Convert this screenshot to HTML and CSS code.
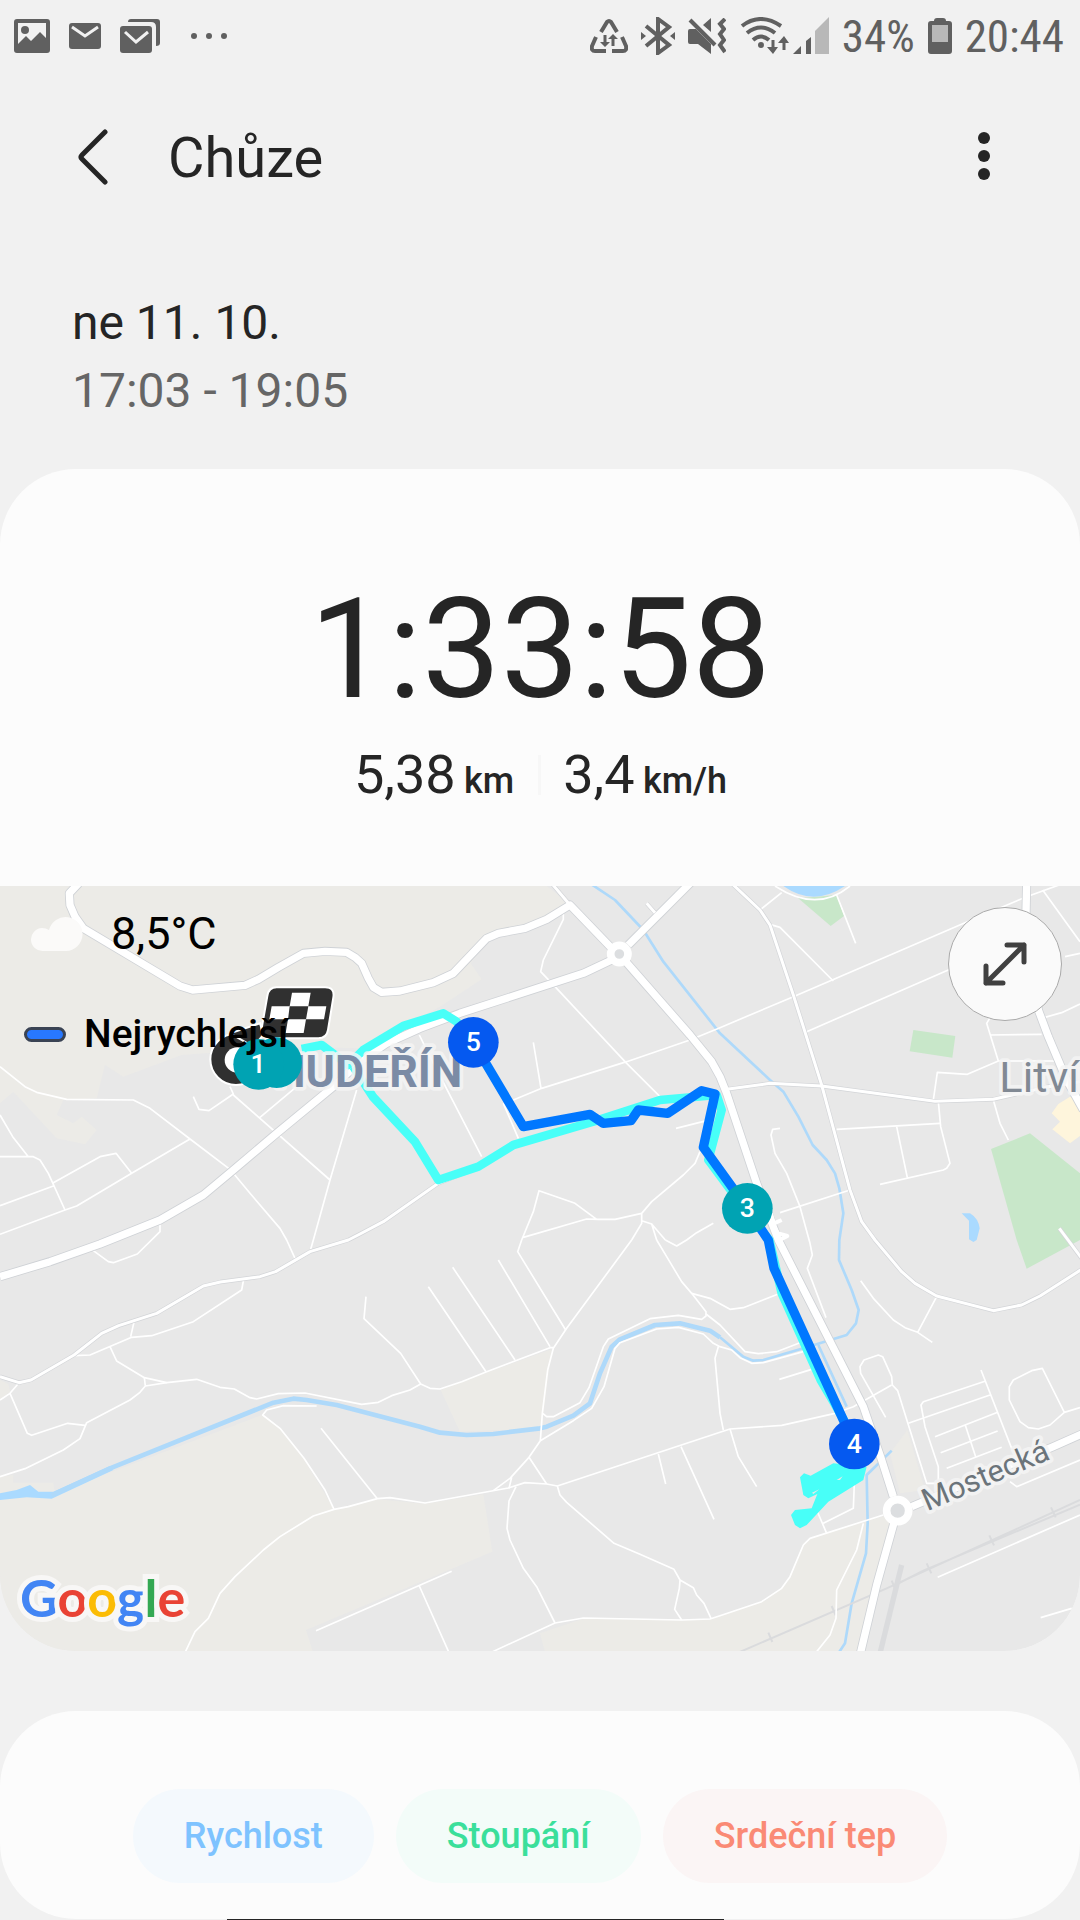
FILE: index.html
```html
<!DOCTYPE html>
<html lang="cs">
<head>
    <meta charset="UTF-8">
    <meta name="viewport" content="width=device-width, initial-scale=1.0">
    <title>Chůze</title>
    <link rel="stylesheet" href="styles.css">
</head>
<body>
    <div class="statusbar">
        <div class="notifications">
            <svg width="36" height="36" viewBox="0 0 36 36">
                <path fill-rule="evenodd" d="M3 1h30a3 3 0 0 1 3 3v28a3 3 0 0 1-3 3H3a3 3 0 0 1-3-3V4a3 3 0 0 1 3-3zM4 5v21l8-8 5 5 9-9 6 6V5z"/>
                <circle cx="11" cy="12" r="4"/>
            </svg>
            <svg width="32" height="36" viewBox="0 0 32 36">
                <rect y="5" width="32" height="26" rx="3"/>
                <path class="cut" d="M3 9l13 9 13-9" stroke-width="3"/>
            </svg>
            <svg width="40" height="36" viewBox="0 0 40 36">
                <rect y="8" width="32" height="27" rx="3"/>
                <path class="cut" d="M5 14l11 10 12-10" stroke-width="3"/>
                <path d="M8 4q0-3 3-3h26q3 0 3 3v21q0 3-4 3V9q0-5-5-5z"/>
            </svg>
            <svg class="more-dots" width="36" height="36" viewBox="0 0 36 36">
                <circle cx="3" cy="18" r="3"/><circle cx="18" cy="18" r="3"/><circle cx="33" cy="18" r="3"/>
            </svg>
        </div>
        <div class="system">
            <svg width="38" height="36" viewBox="0 0 38 36">
                <path class="line" d="M11 14l6-10q2-2 4 0l6 10M6 19l-4 9q-1 5 3 5h11M32 19l4 9q1 5-3 5H22" stroke-width="4"/>
                <path class="line" d="M15 17v9M23 28v-9" stroke-width="3"/>
                <path d="M10 24h10l-5 5zM18 21h10l-5-5z"/>
            </svg>
            <svg width="34" height="38" viewBox="0 0 34 38">
                <path class="line" d="M5 9l23 19-11 8V2l11 8L5 29" stroke-width="4"/>
                <path d="M0 15l5 4-5 4zM34 15l-5 4 5 4z"/>
            </svg>
            <svg width="38" height="36" viewBox="0 0 38 36">
                <path d="M2 11h6l15 15v10L10 26H2q-2 0-2-2V13q0-2 2-2zM23 0v14l-8-7z"/>
                <path class="line" d="M2 2l25 25" stroke-width="4"/>
                <path class="line" d="M37 1l-5 5 4 5-4 5 4 6-4 5 5 7" stroke-width="4"/>
            </svg>
            <div class="network">
                <svg width="50" height="38" viewBox="0 0 50 38">
                    <path class="line" d="M3 9q18-14 39 0M8 16q14-11 28 0M14 23q8-7 16 0" stroke-width="4"/>
                    <circle cx="22" cy="28" r="3"/>
                    <path class="line" d="M34 23v10M45 33V23" stroke-width="3"/>
                    <path d="M28 30h11l-5 7zM39 26h11l-5-7z"/>
                </svg>
                <svg width="36" height="38" viewBox="0 0 36 38">
                    <path d="M0 37l8-8v8zM13 24l5-4v17h-5z"/>
                    <path class="weak" d="M22 14L36 0v37H22z"/>
                </svg>
            </div>
            <span>34%</span>
            <svg width="24" height="36" viewBox="0 0 24 36">
                <path d="M6 3q0-3 3-3h6q3 0 3 3h3q3 0 3 3v27q0 3-3 3H3q-3 0-3-3V6q0-3 3-3z"/>
                <path class="weak" d="M4 7h16v17H4z"/>
            </svg>
            <span>20:44</span>
        </div>
    </div>

    <header class="appbar">
        <button class="iconbtn back" aria-label="Zpět">
            <svg width="32" height="56" viewBox="0 0 32 56"><path d="M29 3L6 26q-2 2 0 4l23 23"/></svg>
        </button>
        <h1 class="title">Chůze</h1>
        <button class="iconbtn more" aria-label="Další možnosti">
            <svg width="12" height="56" viewBox="0 0 12 56"><circle cx="6" cy="9" r="6"/><circle cx="6" cy="27" r="6"/><circle cx="6" cy="45" r="6"/></svg>
        </button>
    </header>

    <div class="when">
        <p class="date">ne 11. 10.</p>
        <p class="time">17:03 - 19:05</p>
    </div>

    <section class="card">
        <div class="summary">
            <p class="duration">1:33:58</p>
            <div class="metrics">
                <p>5,38 <small>km</small></p>
                <p>3,4 <small>km/h</small></p>
            </div>
        </div>

        <div class="map">
            <svg class="mapcanvas" viewBox="0 18 3240 2295">
                <defs>
                    <g id="main">
                        <path d="M236 10L208 40 210 75 225 110 250 145 540 318 578 330 735 316 775 298 835 262 910 220 975 214 1040 217 1065 232 1085 250 1105 295 1120 322 1145 337 1200 333 1300 308 1360 280 1460 175 1495 160 1575 145 1640 118 1710 75 1840 210"/>
                        <path d="M2075 5L1885 195"/>
                        <path d="M1835 240L1750 280 1380 400 1260 445 1160 490 1080 545 1000 620 830 760 700 870 610 945 480 1020 300 1092 150 1145 0 1190"/>
                        <path d="M1880 248L2070 465 2135 545 2160 590 2180 640 2270 910 2335 1080 2590 1580 2645 1740 2680 1850"/>
                        <path d="M2683 1925L2630 2115 2580 2325M2735 1880L3160 1700 3250 1660"/>
                        <path d="M3080 5L3078 100 3115 390 3145 470 3200 600 3250 690"/>
                    </g>
                    <g id="side">
                        <path d="M1655 10L1710 75M1940 70L1965 98"/>
                        <path d="M2195 10L2280 90 2310 135 2380 345 2465 615 2550 930 2585 1025 2625 1080 2705 1175 2745 1210 2810 1248 2980 1292 3065 1275 3120 1248 3245 1168"/>
                        <path d="M2180 628L2310 610 2465 618 2805 664 2980 658 3145 620 3240 605"/>
                        <path d="M0 1490L57 1508 93 1500 222 1425 305 1360 356 1337 470 1300 610 1218 661 1206 780 1190 827 1175 930 1115 1045 1080 1080 1062 1150 1025 1315 910 1440 860 1540 800"/>
                        <path d="M3178 1045L3245 1135"/>
                    </g>
                </defs>

                <g class="land">
                    <path d="M0 18H1640L1705 70 1570 145 1470 175 1412 250 1445 298 1320 380 1080 505 880 500 545 525 370 590 315 555 290 655 190 660 170 705 220 730 245 710 290 750 255 793 170 775 40 635 0 670z"/>
                    <path d="M0 1790L40 1785V1808H160L165 1840 785 1605 840 1645 910 1735 1002 1888 1132 1858 1275 1871 1450 1843 1477 2015 918 2250 940 2320H0z"/>
                    <path d="M0 1500L25 1512 30 1535 0 1560z"/>
                    <path d="M1322 1530L1385 1505 1655 1408 1625 1645 1380 1655z"/>
                    <path d="M1620 2260L1750 2216 2130 2219 2300 2160 2360 2110 2410 1990 2430 1975 2660 1905 2675 1940 2583 2320H1636z"/>
                    <path d="M2722 1650L2670 1720 2700 1840 2775 1830z"/>
                </g>
                <g class="park">
                    <path d="M2395 55L2510 45 2532 108 2492 138z"/>
                    <path d="M2740 450L2866 468 2857 533 2729 514z"/>
                    <path d="M2973 807L3090 760 3240 880V1080L3080 1166 3050 1080z"/>
                </g>
                <path class="shop" d="M3210 650L3175 672 3155 700 3180 725 3157 748 3210 790 3240 768V665z"/>
                <path class="lake" d="M2350 18Q2440 82 2535 18zM2885 1000H2910Q2935 1015 2939 1045L2930 1080 2920 1086 2907 1078V1022z"/>
                <path class="lake" d="M0 1840L50 1830 90 1815 115 1835 160 1835 330 1758 340 1770 155 1856 80 1852 0 1860z"/>
                <g class="water">
                    <path class="river" d="M155 1846L330 1765 820 1568 880 1556 920 1560 1010 1575 1260 1640 1320 1658 1400 1665 1480 1662 1620 1645 1640 1640 1720 1607 1770 1570 1800 1480 1835 1400 1860 1378 1965 1335 2040 1330 2130 1352 2160 1372"/>
                    <path d="M2160 1372L2230 1430 2260 1442 2290 1440 2410 1405 2540 1365 2568 1330 2576 1290 2555 1230 2517 1140 2518 1080 2530 1000 2518 925 2505 880 2480 840 2438 795 2395 710 2350 635 2310 600 2160 460 1990 245 1930 150 1845 60 1770 10"/>
                    <path d="M2455 1395L2540 1580M2675 1712L2600 1785 2603 1930 2598 2020 2555 2170 2535 2290 2515 2320"/>
                </g>
                <g class="rail">
                    <path d="M2210 2320L2660 2125 3240 1860M2680 2118L2770 2072 3240 1874"/>
                    <path class="sleepers" d="M2305 2258l12 28M2495 2178l12 28M2675 2102l12 28M2780 2050l14 30M2968 1966l14 30M3153 1882l14 30"/>
                    <path class="yard" d="M2705 2055L2640 2320"/>
                </g>

                <g class="minor">
                    <path d="M0 560L75 620 110 637 200 658 400 660 450 685 570 777 690 868 750 940 840 1045 860 1080 885 1135M0 705L38 770 85 830M0 830H100L120 840 145 880 195 990M0 977L160 918M160 908L300 830 348 820 395 880M0 1063L195 990 230 978 395 880 570 777"/>
                    <path d="M580 650L597 688 627 692 700 642 690 620M700 645L990 900M780 712L890 620M1070 630L990 900 940 1080 930 1115M480 1030V1055L412 1122 340 1148 325 1145 280 1112"/>
                    <path d="M730 1203L725 1230 580 1325 455 1367 395 1372 270 1425 222 1427M403 1322L392 1370M330 1400L350 1443 433 1493 500 1508 590 1498 660 1522 703 1527 750 1553 770 1557 835 1541 915 1539 1085 1573 1135 1567 1175 1547 1230 1530 1262 1512 1290 1525 1320 1527 1385 1505 1460 1475 1650 1403H1660"/>
                    <path d="M433 1493L436 1518 500 1508M436 1518L420 1537 390 1560 260 1628 240 1676 190 1710 75 1766 0 1790M255 1636L203 1630 95 1666 82 1660 30 1540 57 1508M30 1540L0 1560"/>
                    <path d="M1098 1250L1092 1316 1202 1420 1262 1512M1285 1220L1458 1475M1358 1162L1545 1440M1495 1140L1650 1400M1565 1080L1553 1115 1697 1350"/>
                    <path d="M950 1578L850 1577 800 1590 788 1605 840 1645 912 1735 975 1830 1002 1888M963 1645L1132 1856M554 2320L585 2255 625 2215 660 2140 705 2090 790 2010 840 1970 940 1908 1002 1888 1045 1880 1132 1856 1170 1853 1275 1869 1525 1824 1575 1808 1640 1812 1672 1818 2160 1657 2190 1647 2345 1636 2505 1600 2560 1580 2675 1515"/>
                    <path d="M948 2252L1355 2074M1258 2118L1348 2320M1478 2315L1665 2229 1750 2214 2045 2220 2130 2217 2160 2207 2285 2165 2345 2125 2370 2090 2410 1995 2430 1975 2650 1905"/>
                    <path d="M1895 1080L1700 1345 1660 1405 1643 1470 1627 1600 1621 1682 1587 1732 1530 1795 1480 1832M1535 1792L1527 1825M1587 1732L1640 1812M1628 1600L1640 1610H1660L1740 1568 1767 1523 1810 1400 1825 1377 1950 1316 2035 1306 2105 1318 2118 1308V1295L2075 1240 2045 1205 2000 1130 1970 1080"/>
                    <path d="M1621 1682L1720 1622 1775 1585 1812 1520 1845 1405 1860 1388 1970 1347 2035 1342 2110 1362 2140 1390 2160 1400 2195 1410 2220 1433 2255 1450 2290 1448 2410 1415M2118 1302L2160 1335 2235 1415 2275 1421 2330 1415 2400 1388M2155 1400L2145 1435 2160 1600 2170 1650"/>
                    <path d="M1548 1820L1527 1863 1521 1945 1530 1980 1570 2065 1610 2120 1665 2229M1672 1818L1680 1845 1700 1867 1842 1990 1920 2023 2022 2068 2040 2100 2038 2125 2024 2188 2045 2220M2040 2100L2080 2123 2090 2145 2112 2170 2133 2215M1975 1722L1997 1812M2043 1700L2142 1918M1996 1080L2030 1098 2060 1080 2090 1058 2140 1030"/>
                    <path d="M1690 100V118L1630 240 1622 275 1665 320 1880 550 1980 650M1540 660L1625 625 1880 545 2070 480 2160 443 2380 350 2895 128 3080 50 3180 14M1600 487L1623 625M1510 670L1555 775M1258 465L1290 530 1445 830M2028 745L2120 722"/>
                    <path d="M2100 815L2085 850 2050 885 1955 965 1925 1000V1030L1895 1080M1925 1000L1845 1018H1790L1725 970 1617 932 1600 995 1565 1080M1795 1018L1760 1017 1570 1072M1925 1022L1955 1032 1970 1080M1955 1032L1996 1080"/>
                    <path d="M2310 133L2340 142 2500 303M2280 90L2345 38M2325 18Q2450 100 2550 18M2510 45L2567 190M2420 455L2850 268M2510 748L2820 730M2800 660L2812 577 2902 583 2995 543H3165M2995 543L2960 430 2975 405M2970 465L3125 463M3135 412L3185 398 3240 372M3195 230L3240 220M3128 30L3240 185"/>
                    <path d="M2980 660L3000 730 3025 780M2815 665L2822 740 2850 850 2840 865 2830 870 2640 913M2690 740L2722 893M2340 745L2318 748 2313 765 2325 820 2360 880 2400 980 2430 1090 2437 1125 2422 1165 2478 1313M2340 998L2550 930"/>
                    <path d="M2075 1240L2130 1255 2190 1288 2230 1283 2335 1242M2582 1202L2620 1255 2680 1320 2715 1343 2753 1357 2797 1387M2753 1357L2810 1250M2657 1612L2582 1480 2580 1460 2592 1440 2635 1425 2648 1430 2675 1490 2677 1515 2693 1532 2780 1810H2815"/>
                    <path d="M2943 1470L3035 1705M2955 1504L2770 1565 2763 1575 2775 1640 2815 1760V1800M2725 1630L2970 1545M2805 1670L2993 1597M2895 1633L2927 1730M2822 1718L2993 1653M2840 1765L3005 1702"/>
                    <path d="M3127 1465L3095 1472 3040 1500 3028 1520V1560L3060 1625 3085 1643 3115 1647 3150 1635 3193 1597zM3193 1597L3240 1583M3030 1805L3050 1820 3240 1740M2813 2092L3240 1905M3122 2213L3215 2185"/>
                    <path d="M2590 1930L2570 2010 2510 2130 2508 2215 2490 2265 2450 2315M2190 1647L2215 1730 2270 1820M2338 1498L2435 1468M2480 1960L2450 1890M2470 1930L2560 1885 2563 1810"/>
                </g>
                <use href="#side" class="side-edge"/>
                <use href="#main" class="main-edge"/>
                <use href="#side" class="side-fill"/>
                <use href="#main" class="main-fill"/>
                <g class="roundabout">
                    <circle cx="1858" cy="222" r="26"/>
                    <circle cx="2693" cy="1892" r="33"/>
                    <path class="bridge" d="M2312 1000L2322 1030 2345 1020M2325 1045L2340 1070M2335 1060L2362 1068 2335 1082"/>
                </g>

                <g class="track">
                    <path d="M905 507L965 495 1045 555 1090 510 1210 438 1330 400 1370 425 1420 487"/>
                    <path d="M1060 560L1120 652 1245 785 1315 900 1435 860 1540 795 1780 725 1980 660 2150 645 2165 690 2125 840 2240 995 2308 1080 2328 1165 2345 1240 2462 1500 2500 1565 2572 1692"/>
                </g>
                <path class="loop" fill-rule="evenodd" d="M2500 1750L2432 1787 2412 1780 2400 1792 2410 1845 2425 1855 2452 1842 2435 1885 2385 1890 2373 1905 2385 1935 2400 1945 2420 1935 2485 1865 2590 1800 2600 1760zM2510 1800L2528 1789 2520 1800zM2436 1838L2458 1828 2440 1842z"/>
                <path class="fastest" d="M1420 487L1570 740 1770 703 1810 730 1893 722 1915 690 2003 700 2105 632 2145 642 2110 802 2242 985 2305 1080 2322 1165 2563 1692"/>

                <g class="places">
                    <text class="district" x="1387" y="620">HUDEŘÍN</text>
                    <text class="town" x="2998" y="637">Litvínov</text>
                    <text class="street" transform="translate(2782 1894) rotate(-23)">Mostecká</text>
                </g>

                <g class="flag">
                    <circle class="pin" cx="708" cy="538" r="77"/>
                    <circle class="hole" cx="712" cy="540" r="38"/>
                    <path class="pin" d="M690 460L780 430 790 465 760 500z"/>
                    <path class="pin" d="M830 322H975Q1005 322 1000 352L984 450Q980 475 955 475H810Q780 475 785 445L802 348Q806 322 830 322z"/>
                    <path class="check" d="M876 338H932L925 379H979L972 418H918L911 459H857L864 418H808L815 379H869z"/>
                    <path class="pin-mid" d="M869 379H925L918 418H864z"/>
                </g>
                <g class="marks">
                    <circle class="teal" cx="830" cy="548" r="76"/>
                    <circle class="teal" cx="776" cy="553" r="76"/>
                    <text x="774" y="578">1</text>
                    <circle class="blue" cx="1420" cy="487" r="76"/>
                    <text x="1420" y="513">5</text>
                    <circle class="teal" cx="2242" cy="985" r="76"/>
                    <text x="2242" y="1010">3</text>
                    <circle class="blue" cx="2563" cy="1692" r="76"/>
                    <text x="2563" y="1718">4</text>
                </g>
            </svg>

            <div class="overlay">
                <div class="weather">
                    <svg width="54" height="36" viewBox="0 0 54 36">
                        <path d="M12 35a11 11 0 0 1-1-23q4 0 7 2a17 17 0 1 1 17 21z"/>
                    </svg>
                    <span>8,5°C</span>
                </div>
                <div class="legend"><i class="swatch"></i><span>Nejrychlejší</span></div>
            </div>
            <button class="expand" aria-label="Zvětšit mapu">
                <svg width="44" height="44" viewBox="0 0 44 44"><path d="M3 41L41 3M24 3h17v17M3 24v17h17"/></svg>
            </button>
            <div class="google"><span class="b">G</span><span class="r">o</span><span class="y">o</span><span class="b">g</span><span class="g">l</span><span class="r">e</span></div>
        </div>
    </section>

    <section class="card charts">
        <button class="pill speed">Rychlost</button>
        <button class="pill climb">Stoupání</button>
        <button class="pill pulse">Srdeční tep</button>
    </section>
    <div class="nextbar"></div>
</body>
</html>
```

FILE: styles.css
```css
body {
    margin: 0;
    background-color: #f1f1f1;
    color: #252525;
    font-family: Roboto, "Noto Sans", sans-serif;
}
p, h1 {
    margin: 0;
    font-weight: 400;
}
button {
    border: 0;
    padding: 0;
    background: none;
    font-family: inherit;
    cursor: pointer;
}
svg {
    display: block;
    flex-shrink: 0;
}

/* status bar */
.statusbar {
    display: flex;
    justify-content: space-between;
    align-items: center;
    height: 72px;
    padding: 0 16px 0 14px;
    color: #606060;
    fill: #606060;
    font-family: "Roboto Condensed", "Liberation Sans Narrow", Roboto, sans-serif;
    font-size: 45px;
}
.notifications, .system {
    display: flex;
    align-items: center;
}
.notifications {
    gap: 19px;
}
.more-dots {
    margin-left: 12px;
}
.system {
    gap: 13px;
}
.network {
    display: flex;
    gap: 4px;
}
.cut {
    fill: none;
    stroke: #f1f1f1;
}
.line {
    fill: none;
    stroke: #606060;
}
.weak {
    fill: #b8b8b8;
}

/* title row */
.appbar {
    display: flex;
    align-items: center;
    height: 170px;
    padding: 0 90px 0 76px;
}
.back path {
    fill: none;
    stroke: #252525;
    stroke-width: 5;
    stroke-linecap: round;
}
.more {
    margin-left: auto;
    fill: #252525;
}
.title {
    margin-left: 60px;
    padding-top: 2px;
    font-size: 56px;
}

.when {
    padding: 47px 72px 44px;
    font-size: 48px;
    line-height: 68px;
}
.time {
    color: #666;
}

.card {
    border-radius: 76px;
    background-color: #fcfcfc;
    overflow: hidden;
}
.summary {
    padding: 108px 0 79px;
    text-align: center;
}
.duration {
    font-size: 140px;
    line-height: 144px;
}
.metrics {
    display: flex;
    justify-content: center;
    margin-top: 22px;
    font-size: 54px;
    line-height: 64px;
}
.metrics p {
    padding: 0 24px 0 25px;
}
.metrics p + p {
    background: linear-gradient(#f7f7f7, #f7f7f7) left center / 3px 40px no-repeat;
}
.metrics small {
    margin-left: -5px;
    font-size: 36px;
    font-weight: 500;
    line-height: 1;
}

/* map */
.map {
    position: relative;
    background-color: #e8e8e8;
}
.mapcanvas {
    width: 100%;
    height: auto;
}
.land { fill: #ecebe7; }
.park { fill: #c8e7c9; }
.shop { fill: #fef5dc; }
.lake { fill: #aadaff; }
.water, .rail, .minor, .roundabout, .track, .fastest,
.side-edge, .main-edge, .side-fill, .main-fill {
    fill: none;
    stroke-linejoin: round;
}
.water {
    stroke: #aed9fa;
    stroke-width: 8;
}
.river {
    stroke-width: 14;
}
.rail {
    stroke: #dadbdd;
    stroke-width: 6;
}
.yard {
    stroke-width: 16;
}
.minor {
    stroke: #fff;
    stroke-width: 5;
}
.side-edge {
    stroke: #d3d5d8;
    stroke-width: 13;
}
.side-fill {
    stroke: #fff;
    stroke-width: 9;
}
.main-edge {
    stroke: #cfd2d6;
    stroke-width: 27;
}
.main-fill {
    stroke: #fff;
    stroke-width: 22;
}
.roundabout {
    stroke: #fff;
    stroke-width: 23;
}
.roundabout circle {
    fill: #dcdee0;
}
.bridge {
    stroke-width: 12;
}
.track {
    stroke: #48fff8;
    stroke-width: 26;
}
.loop {
    fill: #48fff8;
}
.fastest {
    stroke: #0077ff;
    stroke-width: 28;
}
.places {
    stroke: rgba(245, 245, 245, 0.85);
    stroke-width: 22;
    stroke-linejoin: round;
    paint-order: stroke;
}
.district {
    fill: #7b8ba5;
    font-size: 134px;
    font-weight: 700;
    text-anchor: end;
}
.town {
    fill: #818994;
    font-size: 130px;
}
.street {
    fill: #6b747a;
    font-size: 92px;
}
.pin {
    fill: #303030;
    stroke: #fff;
    stroke-width: 6;
}
.pin-mid { fill: #303030; }
.hole, .check { fill: #fff; }
.teal { fill: #00a3b3; }
.blue { fill: #0559f0; }
.marks text {
    fill: #fff;
    font-size: 80px;
    font-weight: 500;
    text-anchor: middle;
}

.overlay {
    position: absolute;
    top: 20px;
    left: 24px;
    color: #000;
}
.weather {
    display: flex;
    align-items: center;
    gap: 26px;
    padding-left: 7px;
    font-size: 45px;
    line-height: 56px;
    fill: #fbfaf9;
}
.legend {
    display: flex;
    align-items: center;
    gap: 18px;
    margin-top: 44px;
    font-size: 39px;
    font-weight: 500;
    line-height: 56px;
}
.swatch {
    box-sizing: border-box;
    width: 42px;
    height: 15px;
    border: 3px solid #3a4354;
    border-radius: 8px;
    background-color: #2878ff;
}
.expand {
    position: absolute;
    top: 21px;
    right: 18px;
    display: flex;
    align-items: center;
    justify-content: center;
    box-sizing: border-box;
    width: 114px;
    height: 114px;
    border: 1px solid #aaa;
    border-radius: 50%;
    background-color: #fafafa;
}
.expand path {
    fill: none;
    stroke: #404040;
    stroke-width: 5;
    stroke-linecap: round;
    stroke-linejoin: round;
}
.google {
    position: absolute;
    left: 20px;
    bottom: 20px;
    font-family: Lato, sans-serif;
    font-size: 52px;
    font-weight: 700;
    line-height: 68px;
    -webkit-text-stroke: 10px #f8f7f6;
    paint-order: stroke;
}
.b { color: #4285f4; }
.r { color: #e94335; }
.y { color: #fbbc05; }
.g { color: #34a853; }

/* chart switches */
.charts {
    display: flex;
    justify-content: center;
    gap: 22px;
    margin-top: 60px;
    padding: 78px 0 36px;
}
.pill {
    padding: 0 51px;
    border-radius: 47px;
    font-size: 36px;
    font-weight: 500;
    line-height: 94px;
}
.speed {
    background-color: #f4f9fd;
    color: #7ec3ff;
}
.climb {
    background-color: #f3fcf9;
    color: #3bdf9b;
}
.pulse {
    background-color: #fbf5f5;
    color: #fa8a75;
}
.nextbar {
    height: 1px;
    margin: 0 33% 0 21%;
    background-color: #252525;
}
```
